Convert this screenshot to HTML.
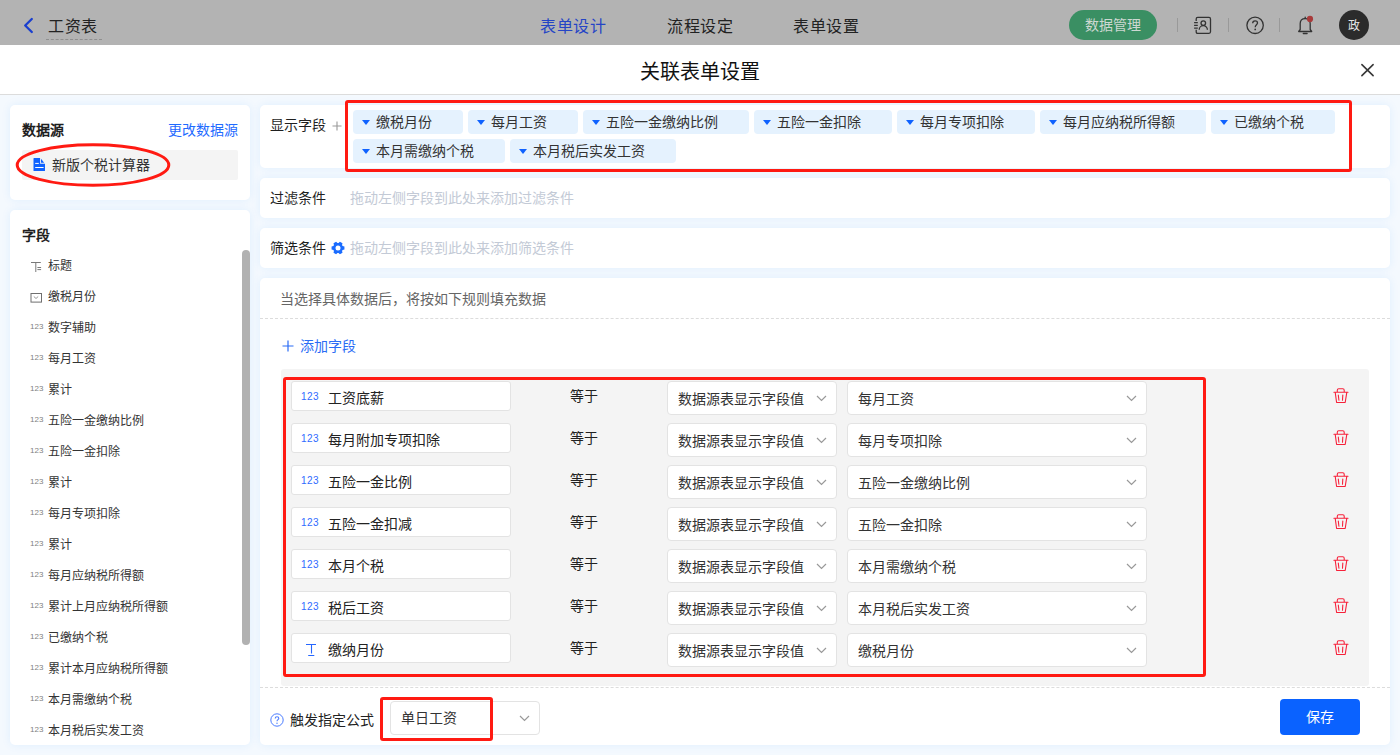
<!DOCTYPE html>
<html lang="zh-CN">
<head>
<meta charset="utf-8">
<style>
*{box-sizing:border-box;margin:0;padding:0}
html,body{width:1400px;height:755px;overflow:hidden}
body{position:relative;font-family:"Liberation Sans",sans-serif;font-size:14px;color:#333;background:#f4f9fe}
.a{position:absolute;white-space:nowrap}
.t14{font-size:14px;line-height:20px}
.t12{font-size:12px;line-height:16px}
.t16{font-size:16px;line-height:22px;letter-spacing:0.5px}
.card{position:absolute;background:#fff;border-radius:5px;box-shadow:0 0 10px rgba(0,130,255,.09)}
.tag{height:24px;background:#e5f2fe;border-radius:4px;font-size:14px;color:#333;padding-left:23px}
.tag span{position:absolute;left:23px;line-height:20px}
.tag i{position:absolute;left:8.5px;top:10px;width:0;height:0;border-left:4.5px solid transparent;border-right:4.5px solid transparent;border-top:5px solid #0f62ff}
.inp{width:220px;height:30px;background:#fff;border:1px solid #e3e3e3;border-radius:3px}
.sel{height:34px;background:#fff;border:1px solid #e3e3e3;border-radius:4px}
.redbox{position:absolute;border:3px solid #ff1a12;border-radius:3px}
</style>
</head>
<body>
<div class="a" style="left:0;top:0;width:1400px;height:45px;background:#b3b3b3"></div>
<svg class="a" style="left:22px;top:17px" width="12" height="17" viewBox="0 0 12 17"><path d="M9.8 2 L3.2 8.5 L9.8 15" fill="none" stroke="#1a3fcf" stroke-width="2.3" stroke-linecap="round" stroke-linejoin="round"/></svg>
<div class="a t16" style="left:48px;top:15.5px;color:#222;">工资表</div>
<div class="a" style="left:46px;top:39px;width:56px;border-top:1px dashed #8f8f8f"></div>
<div class="a t16" style="left:540px;top:15.5px;color:#2444c6;">表单设计</div>
<div class="a t16" style="left:667px;top:15.5px;color:#222;">流程设定</div>
<div class="a t16" style="left:793px;top:15.5px;color:#222;">表单设置</div>
<div class="a" style="left:1069px;top:10px;width:88px;height:30px;border-radius:15px;background:#3a8f63"></div>
<div class="a t14" style="left:1085px;top:15px;color:#cdd8d2;">数据管理</div>
<div class="a" style="left:1177px;top:18px;width:1px;height:14px;background:#999"></div>
<svg class="a" style="left:1188px;top:12px" width="28" height="28" viewBox="0 0 28 28"><path d="M8.2 8.9V6.9Q8.2 5.4 9.7 5.4H21Q22.5 5.4 22.5 6.9V19.8Q22.5 21.3 21 21.3H9.7Q8.2 21.3 8.2 19.8V17.8" fill="none" stroke="#333" stroke-width="1.3"/><path d="M6.1 10.6H9.8M6.1 13.3H9.8M6.1 16.2H9.8" stroke="#333" stroke-width="1.3"/><circle cx="15.3" cy="11.1" r="2.3" fill="none" stroke="#333" stroke-width="1.3"/><path d="M11.2 17.8A4.1 4.1 0 0 1 19.4 17.8" fill="none" stroke="#333" stroke-width="1.3"/></svg>
<div class="a" style="left:1228px;top:18px;width:1px;height:14px;background:#999"></div>
<svg class="a" style="left:1245px;top:16px" width="20" height="20" viewBox="0 0 20 20"><circle cx="10.1" cy="9.3" r="8.2" fill="none" stroke="#333" stroke-width="1.3"/><path d="M7.7 7.3C7.7 5.8 8.8 4.9 10.1 4.9C11.5 4.9 12.5 5.8 12.5 7C12.5 8.7 10.2 8.9 10.2 11.2" fill="none" stroke="#333" stroke-width="1.3"/><circle cx="10.2" cy="13.4" r="0.85" fill="#333"/></svg>
<div class="a" style="left:1279px;top:18px;width:1px;height:14px;background:#999"></div>
<svg class="a" style="left:1296px;top:14px" width="20" height="22" viewBox="0 0 20 22"><path d="M2.7 17.5L4.2 15.5V9.6C4.2 6.6 6.2 4.6 9.2 4.6C12.2 4.6 14.2 6.6 14.2 9.6V15.5L15.7 17.5Z" fill="none" stroke="#333" stroke-width="1.3" stroke-linejoin="round"/><path d="M9.2 3.1V4.4M7.3 19.5H11.1" stroke="#333" stroke-width="1.3" stroke-linecap="round"/><circle cx="14" cy="4.9" r="3.1" fill="#a83a3a"/></svg>
<div class="a" style="left:1339px;top:10px;width:30px;height:30px;border-radius:50%;background:#2b2b2b"></div>
<div class="a" style="left:1339px;top:16px;width:30px;font-size:12px;line-height:20px;color:#e6e6e6;text-align:center">政</div>
<div class="a" style="left:0;top:45px;width:1400px;height:50px;background:#fff;border-bottom:1px solid #dcdcdc"></div>
<div class="a" style="left:640px;top:58px;font-size:20px;line-height:28px;color:#111">关联表单设置</div>
<svg class="a" style="left:1360px;top:63px" width="15" height="14" viewBox="0 0 15 14"><path d="M1.9 1.6 L13.1 12.6 M13.1 1.6 L1.9 12.6" stroke="#383838" stroke-width="1.6" stroke-linecap="round"/></svg>
<div class="card" style="left:10px;top:105px;width:240px;height:95px"></div>
<div class="a t14" style="left:22px;top:120px;color:#1f1f1f;font-weight:bold">数据源</div>
<div class="a t14" style="left:168px;top:120px;color:#1f6bff;">更改数据源</div>
<div class="a" style="left:22px;top:150px;width:216px;height:30px;background:#f4f4f4;border-radius:2px"></div>
<svg class="a" style="left:33px;top:157px" width="13" height="15" viewBox="0 0 13 15"><path d="M0.5 1.5 Q0.5 1 1 1 H7.1 V6.8 H12 V13.6 Q12 14.1 11.5 14.1 H1 Q0.5 14.1 0.5 13.6 Z" fill="#0f62ff"/><path d="M8 1.8 V5.8 H11.2 Z" fill="#0f62ff"/><path d="M2.2 6.4h3.6M2.2 10.5h8.4" stroke="#fff" stroke-width="1"/></svg>
<div class="a t14" style="left:52px;top:155px;color:#333;">新版个税计算器</div>
<svg class="a" style="left:14px;top:142px" width="158" height="47" viewBox="0 0 158 47"><ellipse cx="79" cy="23" rx="75.8" ry="20.3" fill="none" stroke="#ff1a12" stroke-width="3"/></svg>
<div class="card" style="left:10px;top:210px;width:240px;height:535px"></div>
<div class="a t14" style="left:22px;top:225px;color:#1f1f1f;font-weight:bold">字段</div>
<svg class="a" style="left:30px;top:260.5px" width="12" height="12" viewBox="0 0 12 12"><path d="M1 1.5h9.8M5.8 1.5v9.5M7.4 6.5h3.7M7.4 8.6h3.7" stroke="#7a7a7a" stroke-width="1"/></svg>
<div class="a t12" style="left:48px;top:257.5px;color:#333;">标题</div>
<svg class="a" style="left:30px;top:292.5px" width="12" height="10" viewBox="0 0 12 10"><rect x="1" y="0.5" width="10.5" height="8.6" fill="none" stroke="#6f6f6f" stroke-width="1"/><path d="M3.8 3.5 L6 5.5 L8.2 3.5" fill="none" stroke="#8a8a8a" stroke-width="0.9"/></svg>
<div class="a t12" style="left:48px;top:288.5px;color:#333;">缴税月份</div>
<div class="a" style="left:30px;top:322.0px;font-size:8px;line-height:10px;color:#7f7f7f;letter-spacing:0px">123</div>
<div class="a t12" style="left:48px;top:319.5px;color:#333;">数字辅助</div>
<div class="a" style="left:30px;top:353.0px;font-size:8px;line-height:10px;color:#7f7f7f;letter-spacing:0px">123</div>
<div class="a t12" style="left:48px;top:350.5px;color:#333;">每月工资</div>
<div class="a" style="left:30px;top:384.0px;font-size:8px;line-height:10px;color:#7f7f7f;letter-spacing:0px">123</div>
<div class="a t12" style="left:48px;top:381.5px;color:#333;">累计</div>
<div class="a" style="left:30px;top:415.0px;font-size:8px;line-height:10px;color:#7f7f7f;letter-spacing:0px">123</div>
<div class="a t12" style="left:48px;top:412.5px;color:#333;">五险一金缴纳比例</div>
<div class="a" style="left:30px;top:446.0px;font-size:8px;line-height:10px;color:#7f7f7f;letter-spacing:0px">123</div>
<div class="a t12" style="left:48px;top:443.5px;color:#333;">五险一金扣除</div>
<div class="a" style="left:30px;top:477.0px;font-size:8px;line-height:10px;color:#7f7f7f;letter-spacing:0px">123</div>
<div class="a t12" style="left:48px;top:474.5px;color:#333;">累计</div>
<div class="a" style="left:30px;top:508.0px;font-size:8px;line-height:10px;color:#7f7f7f;letter-spacing:0px">123</div>
<div class="a t12" style="left:48px;top:505.5px;color:#333;">每月专项扣除</div>
<div class="a" style="left:30px;top:539.0px;font-size:8px;line-height:10px;color:#7f7f7f;letter-spacing:0px">123</div>
<div class="a t12" style="left:48px;top:536.5px;color:#333;">累计</div>
<div class="a" style="left:30px;top:570.0px;font-size:8px;line-height:10px;color:#7f7f7f;letter-spacing:0px">123</div>
<div class="a t12" style="left:48px;top:567.5px;color:#333;">每月应纳税所得额</div>
<div class="a" style="left:30px;top:601.0px;font-size:8px;line-height:10px;color:#7f7f7f;letter-spacing:0px">123</div>
<div class="a t12" style="left:48px;top:598.5px;color:#333;">累计上月应纳税所得额</div>
<div class="a" style="left:30px;top:632.0px;font-size:8px;line-height:10px;color:#7f7f7f;letter-spacing:0px">123</div>
<div class="a t12" style="left:48px;top:629.5px;color:#333;">已缴纳个税</div>
<div class="a" style="left:30px;top:663.0px;font-size:8px;line-height:10px;color:#7f7f7f;letter-spacing:0px">123</div>
<div class="a t12" style="left:48px;top:660.5px;color:#333;">累计本月应纳税所得额</div>
<div class="a" style="left:30px;top:694.0px;font-size:8px;line-height:10px;color:#7f7f7f;letter-spacing:0px">123</div>
<div class="a t12" style="left:48px;top:691.5px;color:#333;">本月需缴纳个税</div>
<div class="a" style="left:30px;top:725.0px;font-size:8px;line-height:10px;color:#7f7f7f;letter-spacing:0px">123</div>
<div class="a t12" style="left:48px;top:722.5px;color:#333;">本月税后实发工资</div>
<div class="a" style="left:242px;top:250px;width:8px;height:395px;border-radius:4px;background:#b1b1b1"></div>
<div class="card" style="left:260px;top:105px;width:1130px;height:63px"></div>
<div class="a t14" style="left:270px;top:115px;color:#1f1f1f;">显示字段</div>
<svg class="a" style="left:332px;top:121px" width="10" height="10" viewBox="0 0 10 10"><path d="M5 0.5v9M0.5 5h9" stroke="#999" stroke-width="1.1"/></svg>
<div class="a tag" style="left:353px;top:110px;width:110px"><i></i><span style="top:2px">缴税月份</span></div>
<div class="a tag" style="left:468px;top:110px;width:110px"><i></i><span style="top:2px">每月工资</span></div>
<div class="a tag" style="left:583px;top:110px;width:166px"><i></i><span style="top:2px">五险一金缴纳比例</span></div>
<div class="a tag" style="left:754px;top:110px;width:138px"><i></i><span style="top:2px">五险一金扣除</span></div>
<div class="a tag" style="left:897px;top:110px;width:138px"><i></i><span style="top:2px">每月专项扣除</span></div>
<div class="a tag" style="left:1040px;top:110px;width:166px"><i></i><span style="top:2px">每月应纳税所得额</span></div>
<div class="a tag" style="left:1211px;top:110px;width:124px"><i></i><span style="top:2px">已缴纳个税</span></div>
<div class="a tag" style="left:353px;top:139px;width:152px"><i></i><span style="top:2px">本月需缴纳个税</span></div>
<div class="a tag" style="left:510px;top:139px;width:166px"><i></i><span style="top:2px">本月税后实发工资</span></div>
<div class="redbox" style="left:345px;top:100px;width:1007px;height:72px"></div>
<div class="card" style="left:260px;top:178px;width:1130px;height:40px"></div>
<div class="a t14" style="left:270px;top:188px;color:#1f1f1f;">过滤条件</div>
<div class="a t14" style="left:350px;top:188px;color:#c3cad6;">拖动左侧字段到此处来添加过滤条件</div>
<div class="card" style="left:260px;top:228px;width:1130px;height:40px"></div>
<div class="a t14" style="left:270px;top:238px;color:#1f1f1f;">筛选条件</div>
<svg class="a" style="left:330.5px;top:241px" width="14" height="14" viewBox="0 0 14 14"><polygon points="11.57,4.97 13.43,5.52 13.43,8.48 11.57,9.03 11.05,9.94 11.50,11.83 8.93,13.31 7.52,11.97 6.48,11.97 5.07,13.31 2.50,11.83 2.95,9.94 2.43,9.03 0.57,8.48 0.57,5.52 2.43,4.97 2.95,4.06 2.50,2.17 5.07,0.69 6.48,2.03 7.52,2.03 8.93,0.69 11.50,2.17 11.05,4.06" fill="#1a6cff"/><circle cx="7" cy="7" r="2.5" fill="#fff"/></svg>
<div class="a t14" style="left:350px;top:238px;color:#c3cad6;">拖动左侧字段到此处来添加筛选条件</div>
<div class="card" style="left:260px;top:278px;width:1130px;height:467px"></div>
<div class="a t14" style="left:280px;top:289px;color:#666;">当选择具体数据后，将按如下规则填充数据</div>
<div class="a" style="left:260px;top:318px;width:1130px;border-top:1px dashed #dcdcdc"></div>
<svg class="a" style="left:282px;top:340px" width="12" height="12" viewBox="0 0 12 12"><path d="M6 0.5v11M0.5 6h11" stroke="#2a6cf5" stroke-width="1.2"/></svg>
<div class="a t14" style="left:300px;top:336px;color:#2a6cf5;">添加字段</div>
<div class="a" style="left:281px;top:369px;width:1088px;height:317px;background:#f4f4f4;border-radius:3px"></div>
<div class="a inp" style="left:291px;top:381px"></div>
<div class="a" style="left:301px;top:391px;font-size:10px;line-height:12px;color:#2f6bff;letter-spacing:0.5px">123</div>
<div class="a t14" style="left:328px;top:388px;color:#222;">工资底薪</div>
<div class="a t14" style="left:570px;top:386px;color:#222;">等于</div>
<div class="a sel" style="left:667px;top:381px;width:170px"></div>
<div class="a t14" style="left:678px;top:389px;color:#333;">数据源表显示字段值</div>
<svg class="a" style="left:816px;top:395px" width="11" height="7" viewBox="0 0 11 7"><path d="M1 1 L5.5 5.5 L10 1" fill="none" stroke="#999" stroke-width="1.2"/></svg>
<div class="a sel" style="left:847px;top:381px;width:300px"></div>
<div class="a t14" style="left:858px;top:389px;color:#333;">每月工资</div>
<svg class="a" style="left:1126px;top:395px" width="11" height="7" viewBox="0 0 11 7"><path d="M1 1 L5.5 5.5 L10 1" fill="none" stroke="#999" stroke-width="1.2"/></svg>
<svg class="a" style="left:1333px;top:388px" width="16" height="16" viewBox="0 0 16 16"><path d="M0.9 4.3H15M4.3 4.3V2.2Q4.3 0.8 5.7 0.8H9.8Q11.2 0.8 11.2 2.2V4.3M2.2 4.3L3.6 14.5H12.2L13.8 4.3M5.3 7L5.9 12.2M9.8 7L9.5 12.2" fill="none" stroke="#f7213a" stroke-width="1.1" stroke-linejoin="round" stroke-linecap="round"/></svg>
<div class="a inp" style="left:291px;top:423px"></div>
<div class="a" style="left:301px;top:433px;font-size:10px;line-height:12px;color:#2f6bff;letter-spacing:0.5px">123</div>
<div class="a t14" style="left:328px;top:430px;color:#222;">每月附加专项扣除</div>
<div class="a t14" style="left:570px;top:428px;color:#222;">等于</div>
<div class="a sel" style="left:667px;top:423px;width:170px"></div>
<div class="a t14" style="left:678px;top:431px;color:#333;">数据源表显示字段值</div>
<svg class="a" style="left:816px;top:437px" width="11" height="7" viewBox="0 0 11 7"><path d="M1 1 L5.5 5.5 L10 1" fill="none" stroke="#999" stroke-width="1.2"/></svg>
<div class="a sel" style="left:847px;top:423px;width:300px"></div>
<div class="a t14" style="left:858px;top:431px;color:#333;">每月专项扣除</div>
<svg class="a" style="left:1126px;top:437px" width="11" height="7" viewBox="0 0 11 7"><path d="M1 1 L5.5 5.5 L10 1" fill="none" stroke="#999" stroke-width="1.2"/></svg>
<svg class="a" style="left:1333px;top:430px" width="16" height="16" viewBox="0 0 16 16"><path d="M0.9 4.3H15M4.3 4.3V2.2Q4.3 0.8 5.7 0.8H9.8Q11.2 0.8 11.2 2.2V4.3M2.2 4.3L3.6 14.5H12.2L13.8 4.3M5.3 7L5.9 12.2M9.8 7L9.5 12.2" fill="none" stroke="#f7213a" stroke-width="1.1" stroke-linejoin="round" stroke-linecap="round"/></svg>
<div class="a inp" style="left:291px;top:465px"></div>
<div class="a" style="left:301px;top:475px;font-size:10px;line-height:12px;color:#2f6bff;letter-spacing:0.5px">123</div>
<div class="a t14" style="left:328px;top:472px;color:#222;">五险一金比例</div>
<div class="a t14" style="left:570px;top:470px;color:#222;">等于</div>
<div class="a sel" style="left:667px;top:465px;width:170px"></div>
<div class="a t14" style="left:678px;top:473px;color:#333;">数据源表显示字段值</div>
<svg class="a" style="left:816px;top:479px" width="11" height="7" viewBox="0 0 11 7"><path d="M1 1 L5.5 5.5 L10 1" fill="none" stroke="#999" stroke-width="1.2"/></svg>
<div class="a sel" style="left:847px;top:465px;width:300px"></div>
<div class="a t14" style="left:858px;top:473px;color:#333;">五险一金缴纳比例</div>
<svg class="a" style="left:1126px;top:479px" width="11" height="7" viewBox="0 0 11 7"><path d="M1 1 L5.5 5.5 L10 1" fill="none" stroke="#999" stroke-width="1.2"/></svg>
<svg class="a" style="left:1333px;top:472px" width="16" height="16" viewBox="0 0 16 16"><path d="M0.9 4.3H15M4.3 4.3V2.2Q4.3 0.8 5.7 0.8H9.8Q11.2 0.8 11.2 2.2V4.3M2.2 4.3L3.6 14.5H12.2L13.8 4.3M5.3 7L5.9 12.2M9.8 7L9.5 12.2" fill="none" stroke="#f7213a" stroke-width="1.1" stroke-linejoin="round" stroke-linecap="round"/></svg>
<div class="a inp" style="left:291px;top:507px"></div>
<div class="a" style="left:301px;top:517px;font-size:10px;line-height:12px;color:#2f6bff;letter-spacing:0.5px">123</div>
<div class="a t14" style="left:328px;top:514px;color:#222;">五险一金扣减</div>
<div class="a t14" style="left:570px;top:512px;color:#222;">等于</div>
<div class="a sel" style="left:667px;top:507px;width:170px"></div>
<div class="a t14" style="left:678px;top:515px;color:#333;">数据源表显示字段值</div>
<svg class="a" style="left:816px;top:521px" width="11" height="7" viewBox="0 0 11 7"><path d="M1 1 L5.5 5.5 L10 1" fill="none" stroke="#999" stroke-width="1.2"/></svg>
<div class="a sel" style="left:847px;top:507px;width:300px"></div>
<div class="a t14" style="left:858px;top:515px;color:#333;">五险一金扣除</div>
<svg class="a" style="left:1126px;top:521px" width="11" height="7" viewBox="0 0 11 7"><path d="M1 1 L5.5 5.5 L10 1" fill="none" stroke="#999" stroke-width="1.2"/></svg>
<svg class="a" style="left:1333px;top:514px" width="16" height="16" viewBox="0 0 16 16"><path d="M0.9 4.3H15M4.3 4.3V2.2Q4.3 0.8 5.7 0.8H9.8Q11.2 0.8 11.2 2.2V4.3M2.2 4.3L3.6 14.5H12.2L13.8 4.3M5.3 7L5.9 12.2M9.8 7L9.5 12.2" fill="none" stroke="#f7213a" stroke-width="1.1" stroke-linejoin="round" stroke-linecap="round"/></svg>
<div class="a inp" style="left:291px;top:549px"></div>
<div class="a" style="left:301px;top:559px;font-size:10px;line-height:12px;color:#2f6bff;letter-spacing:0.5px">123</div>
<div class="a t14" style="left:328px;top:556px;color:#222;">本月个税</div>
<div class="a t14" style="left:570px;top:554px;color:#222;">等于</div>
<div class="a sel" style="left:667px;top:549px;width:170px"></div>
<div class="a t14" style="left:678px;top:557px;color:#333;">数据源表显示字段值</div>
<svg class="a" style="left:816px;top:563px" width="11" height="7" viewBox="0 0 11 7"><path d="M1 1 L5.5 5.5 L10 1" fill="none" stroke="#999" stroke-width="1.2"/></svg>
<div class="a sel" style="left:847px;top:549px;width:300px"></div>
<div class="a t14" style="left:858px;top:557px;color:#333;">本月需缴纳个税</div>
<svg class="a" style="left:1126px;top:563px" width="11" height="7" viewBox="0 0 11 7"><path d="M1 1 L5.5 5.5 L10 1" fill="none" stroke="#999" stroke-width="1.2"/></svg>
<svg class="a" style="left:1333px;top:556px" width="16" height="16" viewBox="0 0 16 16"><path d="M0.9 4.3H15M4.3 4.3V2.2Q4.3 0.8 5.7 0.8H9.8Q11.2 0.8 11.2 2.2V4.3M2.2 4.3L3.6 14.5H12.2L13.8 4.3M5.3 7L5.9 12.2M9.8 7L9.5 12.2" fill="none" stroke="#f7213a" stroke-width="1.1" stroke-linejoin="round" stroke-linecap="round"/></svg>
<div class="a inp" style="left:291px;top:591px"></div>
<div class="a" style="left:301px;top:601px;font-size:10px;line-height:12px;color:#2f6bff;letter-spacing:0.5px">123</div>
<div class="a t14" style="left:328px;top:598px;color:#222;">税后工资</div>
<div class="a t14" style="left:570px;top:596px;color:#222;">等于</div>
<div class="a sel" style="left:667px;top:591px;width:170px"></div>
<div class="a t14" style="left:678px;top:599px;color:#333;">数据源表显示字段值</div>
<svg class="a" style="left:816px;top:605px" width="11" height="7" viewBox="0 0 11 7"><path d="M1 1 L5.5 5.5 L10 1" fill="none" stroke="#999" stroke-width="1.2"/></svg>
<div class="a sel" style="left:847px;top:591px;width:300px"></div>
<div class="a t14" style="left:858px;top:599px;color:#333;">本月税后实发工资</div>
<svg class="a" style="left:1126px;top:605px" width="11" height="7" viewBox="0 0 11 7"><path d="M1 1 L5.5 5.5 L10 1" fill="none" stroke="#999" stroke-width="1.2"/></svg>
<svg class="a" style="left:1333px;top:598px" width="16" height="16" viewBox="0 0 16 16"><path d="M0.9 4.3H15M4.3 4.3V2.2Q4.3 0.8 5.7 0.8H9.8Q11.2 0.8 11.2 2.2V4.3M2.2 4.3L3.6 14.5H12.2L13.8 4.3M5.3 7L5.9 12.2M9.8 7L9.5 12.2" fill="none" stroke="#f7213a" stroke-width="1.1" stroke-linejoin="round" stroke-linecap="round"/></svg>
<div class="a inp" style="left:291px;top:633px"></div>
<svg class="a" style="left:305px;top:643px" width="12" height="14" viewBox="0 0 12 14"><path d="M1 1.5H11M6.5 1.5V10.6M3.2 12.5H9.3" fill="none" stroke="#2566ff" stroke-width="1.1"/></svg>
<div class="a t14" style="left:328px;top:640px;color:#222;">缴纳月份</div>
<div class="a t14" style="left:570px;top:638px;color:#222;">等于</div>
<div class="a sel" style="left:667px;top:633px;width:170px"></div>
<div class="a t14" style="left:678px;top:641px;color:#333;">数据源表显示字段值</div>
<svg class="a" style="left:816px;top:647px" width="11" height="7" viewBox="0 0 11 7"><path d="M1 1 L5.5 5.5 L10 1" fill="none" stroke="#999" stroke-width="1.2"/></svg>
<div class="a sel" style="left:847px;top:633px;width:300px"></div>
<div class="a t14" style="left:858px;top:641px;color:#333;">缴税月份</div>
<svg class="a" style="left:1126px;top:647px" width="11" height="7" viewBox="0 0 11 7"><path d="M1 1 L5.5 5.5 L10 1" fill="none" stroke="#999" stroke-width="1.2"/></svg>
<svg class="a" style="left:1333px;top:640px" width="16" height="16" viewBox="0 0 16 16"><path d="M0.9 4.3H15M4.3 4.3V2.2Q4.3 0.8 5.7 0.8H9.8Q11.2 0.8 11.2 2.2V4.3M2.2 4.3L3.6 14.5H12.2L13.8 4.3M5.3 7L5.9 12.2M9.8 7L9.5 12.2" fill="none" stroke="#f7213a" stroke-width="1.1" stroke-linejoin="round" stroke-linecap="round"/></svg>
<div class="redbox" style="left:283px;top:377px;width:923px;height:300px"></div>
<div class="a" style="left:260px;top:687px;width:1130px;border-top:1px dashed #dcdcdc"></div>
<svg class="a" style="left:270px;top:713px" width="14" height="14" viewBox="0 0 14 14"><circle cx="7" cy="7" r="6.2" fill="none" stroke="#4a7cff" stroke-width="1"/><path d="M5.2 5.5C5.2 4.4 6 3.7 7 3.7S8.8 4.4 8.8 5.4C8.8 6.6 7 6.7 7 8.2" fill="none" stroke="#4a7cff" stroke-width="1.1"/><circle cx="7" cy="10.2" r="0.7" fill="#4a7cff"/></svg>
<div class="a t14" style="left:290px;top:710px;color:#222;">触发指定公式</div>
<div class="a sel" style="left:390px;top:701px;width:150px;height:34px"></div>
<div class="a t14" style="left:401px;top:708px;color:#333;">单日工资</div>
<svg class="a" style="left:519px;top:715px" width="11" height="7" viewBox="0 0 11 7"><path d="M1 1 L5.5 5.5 L10 1" fill="none" stroke="#999" stroke-width="1.2"/></svg>
<div class="redbox" style="left:380px;top:697px;width:113px;height:44px"></div>
<div class="a" style="left:1280px;top:699px;width:80px;height:36px;background:#0a62ff;border-radius:4px"></div>
<div class="a t14" style="left:1280px;top:707px;width:80px;text-align:center;color:#fff;font-weight:500">保存</div>
</body>
</html>
